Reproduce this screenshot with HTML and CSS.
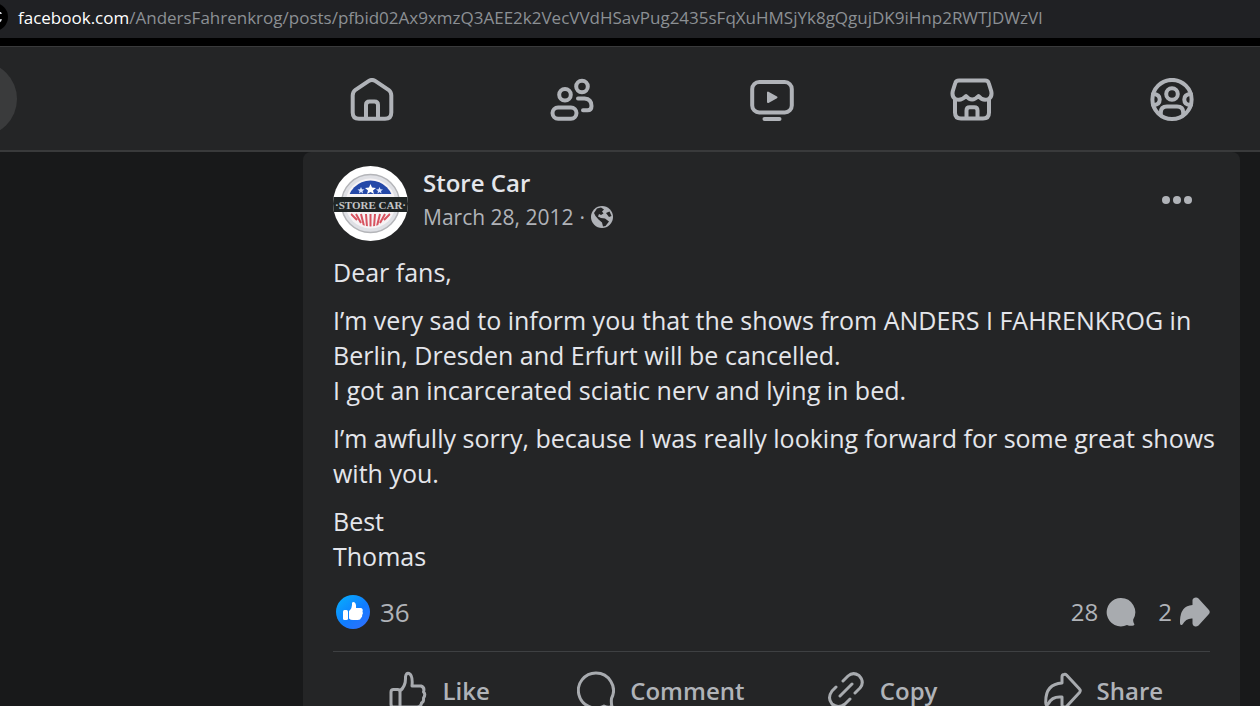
FILE: index.html
```
<!DOCTYPE html>
<html lang="en">
<head>
    <meta charset="UTF-8">
    <meta name="viewport" content="width=device-width, initial-scale=1.0">
    <title>Store Car | Facebook</title>
    <link rel="stylesheet" href="styles.css">
</head>
<body>
    <div class="address-bar">
        <svg class="site-badge" viewBox="0 0 8 28" aria-hidden="true">
            <circle cx="-6" cy="14" r="14" fill="#000"/>
            <path d="M-2 10Q1 9 1 11M-2 19Q1 19 1 16" fill="none" stroke="#e4e6eb" stroke-width="1.5"/>
        </svg>
        <div class="url"><span class="domain">facebook.com</span>/AndersFahrenkrog/posts/pfbid02Ax9xmzQ3AEE2k2VecVVdHSavPug2435sFqXuHMSjYk8gQgujDK9iHnp2RWTJDWzVl</div>
    </div>

    <header class="top-bar">
        <button type="button" class="search-button" aria-label="Search"></button>
        <nav class="main-nav">
            <a href="#" aria-label="Home">
                <svg viewBox="0 0 44 44">
                    <path d="M2.7 17.5Q2.7 14 5.5 11.8L18.5 3.1Q22 .8 25.5 3.1L38.5 11.8Q41.3 14 41.3 17.5V34.5Q41.3 40.8 35 40.8H9Q2.7 40.8 2.7 34.5Z"/>
                    <path d="M16 40V27Q16 23.5 19.5 23.5H24.5Q28 23.5 28 27V40"/>
                </svg>
            </a>
            <a href="#" aria-label="Friends">
                <svg viewBox="0 0 44 44">
                    <circle cx="15" cy="16.7" r="5.8"/>
                    <circle cx="32" cy="8.5" r="5.8"/>
                    <rect x="2.5" y="29.5" width="24" height="11.2" rx="5.6"/>
                    <path d="M28 20.5H34.5Q41.5 21 41.5 28Q41.5 32.3 37.5 32.3H33"/>
                </svg>
            </a>
            <a href="#" aria-label="Video">
                <svg viewBox="0 0 44 44">
                    <rect x="2.2" y="4" width="39.6" height="30.5" rx="7"/>
                    <path d="M18 14.5V24L26.5 19.3Z" fill="#b0b3b8" stroke-width="2"/>
                    <path d="M14.5 41H29.5"/>
                </svg>
            </a>
            <a href="#" aria-label="Marketplace">
                <svg viewBox="0 0 44 44">
                    <path d="M9 2.5H35Q38 2.5 38.7 5L41.2 13Q42.5 19 38.5 21Q33 23.5 28.5 18Q22 25 16 18Q11 23.5 5.5 21Q1.5 19 2.8 13L5.3 5Q6 2.5 9 2.5Z"/>
                    <path d="M5 22V34.5Q5 40.5 11 40.5H33Q39 40.5 39 34.5V22M16.5 40V32.5Q16.5 29.2 19.8 29.2H24.2Q27.5 29.2 27.5 32.5V40"/>
                </svg>
            </a>
            <a href="#" aria-label="Groups">
                <svg viewBox="0 0 44 44">
                    <circle cx="22" cy="21.5" r="19.6"/>
                    <circle cx="22" cy="16" r="5.8"/>
                    <path d="M10.8 37V34.5Q10.8 28.5 17 28.5H27Q33.2 28.5 33.2 34.5V37M3 16Q9.7 16 9.7 21.5Q9.7 27 3 27M41 16Q34.3 16 34.3 21.5Q34.3 27 41 27"/>
                </svg>
            </a>
        </nav>
    </header>

    <main class="feed">
        <article class="post">
            <div class="post-header">
                <a href="#" class="avatar" aria-label="Store Car">
                    <svg viewBox="0 0 75 75">
                        <defs>
                            <clipPath id="avatarClip"><circle cx="37.5" cy="37.5" r="37.5"/></clipPath>
                            <clipPath id="badgeClip"><circle cx="37.5" cy="37.5" r="23"/></clipPath>
                        </defs>
                        <g clip-path="url(#avatarClip)">
                            <rect width="75" height="75" fill="#fff"/>
                            <circle cx="37.5" cy="37.5" r="29" fill="#dfe0e5" stroke="#b4b5b9" stroke-width="1.5"/>
                            <circle cx="37.5" cy="37.5" r="25" fill="#f6f3f5"/>
                            <g clip-path="url(#badgeClip)">
                                <path d="M14 14H61V28H14Z" fill="#2448a8"/>
                                <path d="M18 48L24 54M23 48L28 57M28 48L31 60M33 48L34 61M37.5 48V62M42 48L41 61M47 48L44 60M52 48L47 57M57 48L51 54" stroke="#d85360" stroke-width="2"/>
                            </g>
                            <path d="M37.5 18L39 21.5L43 22L40 24.5L41 28L37.5 26L34 28L35 24.5L32 22L36 21.5Z" fill="#fff"/>
                            <path d="M28 21L29 23.3L31.5 23.5L29.5 25L30 27.5L28 26L26 27.5L26.5 25L24.5 23.5L27 23.3ZM46.500 21L47.5 23.3L50 23.5L48 25L48.5 27.5L46.5 26L44.5 27.5L45 25L43 23.5L45.5 23.3Z" fill="#dbe5ff"/>
                            <rect y="31" width="75" height="15" fill="#1f2424"/>
                            <text x="37.5" y="42.5" text-anchor="middle" class="avatar-text">·STORE CAR·</text>
                        </g>
                    </svg>
                </a>
                <div class="post-meta">
                    <a href="#" class="author">Store Car</a>
                    <div class="date-row">
                        <a href="#">March 28, 2012</a>
                        <span>·</span>
                        <svg class="globe" viewBox="0 0 22 22" aria-label="Public">
                            <circle cx="11" cy="11" r="11" fill="#b0b3b8"/>
                            <path d="M6 2.5L10 1.5L13 3.5L11 5.5L12.5 7.5L10 9L8 8L7 10.5L10 12L14 12.5L18 15.5L14.5 20L12 20.5L11 16.5L7.5 13.5L4.5 10L3 7Z" fill="#242526"/>
                            <path d="M15 7L18.5 5.5L20.5 10L18 11Z" fill="#242526"/>
                        </svg>
                    </div>
                </div>
                <button type="button" class="more-button" aria-label="More options">
                    <svg viewBox="0 0 30 8"><circle cx="4" cy="4" r="4"/><circle cx="15" cy="4" r="4"/><circle cx="26" cy="4" r="4"/></svg>
                </button>
            </div>

            <div class="post-text">
                <p>Dear fans,</p>
                <p>I’m very sad to inform you that the shows from ANDERS I FAHRENKROG in Berlin, Dresden and Erfurt will be cancelled.<br>I got an incarcerated sciatic nerv and lying in bed.</p>
                <p>I’m awfully sorry, because I was really looking forward for some great shows with you.</p>
                <p>Best<br>Thomas</p>
            </div>

            <div class="stats">
                <button type="button" class="stat likes">
                    <svg class="like-badge" viewBox="0 0 34 34">
                        <defs>
                            <linearGradient id="likeFill" x1="0.1" y1="0.1" x2="0.8" y2="0.9">
                                <stop offset="0" stop-color="#08a9fc"/>
                                <stop offset="0.6" stop-color="#107cff"/>
                                <stop offset="1" stop-color="#2a72ff"/>
                            </linearGradient>
                        </defs>
                        <circle cx="17" cy="17" r="17" fill="url(#likeFill)"/>
                        <rect x="7" y="15" width="5" height="10" rx="1.5" fill="#fff"/>
                        <path d="M13 16Q16.5 13 16 8Q16.2 7 17.5 7Q20.5 7.5 20 13H25Q27.5 14 26.5 16.5Q27.5 18 26.2 20Q26.5 22 25 23Q24.5 25 22 25H17Q14.5 25 13 23.5Z" fill="#fff"/>
                    </svg>
                    <span>36</span>
                </button>
                <div class="stats-right">
                    <button type="button" class="stat">
                        <span>28</span>
                        <svg viewBox="0 0 30 30"><path d="M15 1A14.200 14.200 0 1 0 21 28Q24 29.3 27.5 28.6Q29 28 28 26.5Q27 25 27.2 22.5A14.2 14.2 0 0 0 15 1Z"/></svg>
                    </button>
                    <button type="button" class="stat">
                        <span>2</span>
                        <svg viewBox="0 0 30 30"><path d="M12.5 8V3Q13 .5 16 .5Q17.500 .5 18.5 1.5L28.5 12.5Q31 15 28.5 17.500L18.5 28.5Q16.5 30 14.5 29.3Q12.5 28.8 12.5 26.5V21.5Q6 21 2.5 27.5Q0 29 0 26Q-.5 9 12.5 8Z"/></svg>
                    </button>
                </div>
            </div>

            <div class="actions">
                <button type="button" class="action">
                    <svg viewBox="0 0 38 38">
                        <path d="M11 20Q17 15 16.5 6Q17 1.5 20 2.5Q24 4 23 15H32Q36 16.5 34.5 21Q37 23 34.5 27Q35 31 32.5 32Q32 36 28 36H4.5Q2 36 2 33V21Q2 18.5 4.5 18.5H8.5Q11 18.5 11 21V35"/>
                    </svg>
                    Like
                </button>
                <button type="button" class="action">
                    <svg viewBox="0 0 38 38">
                        <path d="M19 2A17.5 17.5 0 1 0 27 35Q31 37 35 35.5Q34 32 34.5 27.5A17.5 17.5 0 0 0 19 2Z"/>
                    </svg>
                    Comment
                </button>
                <button type="button" class="action">
                    <svg viewBox="0 0 38 38">
                        <path d="M16 10L21 5Q26 .5 32 4.5Q38 11 33 17L28 22M9 16L5 20Q0 27 5 33Q11 38 18 33L23 28M13 25L25 13"/>
                    </svg>
                    Copy
                </button>
                <button type="button" class="action">
                    <svg viewBox="0 0 38 38">
                        <path d="M18 12V6Q18 3.5 20 3.500Q21.5 3 22.5 4L35.5 18Q37 19.5 35.5 21.5L23 35Q21.5 36.5 19.5 36Q18 35.5 18 33.5V26Q8 25 4.5 32.5Q2 36 1.8 32Q1 13 18 12Z"/>
                    </svg>
                    Share
                </button>
            </div>
        </article>
    </main>
</body>
</html>
```
FILE: styles.css
```
* {
    box-sizing: border-box;
}
body {
    margin: 0;
    height: 100vh;
    overflow: hidden;
    background-color: #18191a;
    color: #e4e6eb;
    font-family: "Segoe UI", "Open Sans", sans-serif;
    font-size: 24px;
}
a {
    color: inherit;
    text-decoration: none;
}
button {
    display: flex;
    align-items: center;
    padding: 0;
    border: none;
    background: none;
    color: #b0b3b8;
    font-family: inherit;
    font-size: 24px;
    cursor: pointer;
}
svg {
    display: block;
    flex-shrink: 0;
}

/* Browser address bar */
.address-bar {
    display: flex;
    align-items: center;
    gap: 10px;
    height: 46px;
    padding-bottom: 4px;
    background-color: #202124;
    border-bottom: 8px solid #000;
}
.site-badge {
    width: 8px;
    height: 28px;
}
.url {
    color: #8c9094;
    font-size: 17px;
    white-space: nowrap;
}
.domain {
    color: #fff;
}

/* Top navigation */
.top-bar {
    display: flex;
    align-items: center;
    height: 106px;
    overflow: hidden;
    background-color: #242526;
    border-top: 1px solid #393a3b;
    border-bottom: 2px solid #393a3b;
}
.search-button {
    flex-shrink: 0;
    width: 74px;
    height: 74px;
    margin-left: -57px;
    border-radius: 50%;
    background-color: #3a3b3c;
}
.main-nav {
    display: grid;
    grid-template-columns: repeat(5, 1fr);
    flex: 1;
    margin-left: 255px;
    margin-right: -12px;
    padding-top: 2px;
}
.main-nav a {
    display: flex;
    justify-content: center;
}
.main-nav svg {
    width: 44px;
    height: 44px;
    fill: none;
    stroke: #b0b3b8;
    stroke-width: 4;
    stroke-linecap: round;
    stroke-linejoin: round;
}

/* Post */
.feed {
    padding: 0 20px 0 303px;
}
.post {
    padding: 14px 30px 20px;
    border-radius: 8px;
    background-color: #242526;
}
.post-header {
    display: flex;
    align-items: center;
    height: 75px;
}
.avatar svg {
    width: 75px;
    height: 75px;
}
.avatar-text {
    fill: #c4c6c6;
    font-family: "Liberation Serif", serif;
    font-size: 11px;
    font-weight: bold;
}
.post-meta {
    flex: 1;
    margin-left: 15px;
    padding-bottom: 8px;
}
.author {
    display: block;
    font-weight: 600;
    line-height: 34px;
}
.date-row {
    display: flex;
    align-items: center;
    gap: 6px;
    color: #b0b3b8;
    font-size: 21px;
    line-height: 34px;
}
.globe {
    width: 22px;
    height: 22px;
}
.more-button {
    margin-right: 18px;
    padding-bottom: 8px;
}
.more-button svg {
    width: 30px;
    height: 8px;
    fill: #b0b3b8;
}
.post-text {
    margin: 14px -8px 0 0;
    font-size: 25px;
    line-height: 35px;
}
.post-text p {
    margin: 0 0 13px;
}
.post-text p:last-child {
    margin-bottom: 0;
}

/* Reactions and counters */
.stats {
    display: flex;
    align-items: center;
    justify-content: space-between;
    height: 78px;
    padding-left: 3px;
    padding-bottom: 2px;
    border-bottom: 1px solid #3e4042;
}
.stats-right {
    display: flex;
    gap: 22px;
}
.stat {
    gap: 8px;
}
.stat svg {
    width: 30px;
    height: 30px;
    fill: #a8abaf;
}
.likes {
    gap: 10px;
    font-size: 26px;
}
.likes .like-badge {
    width: 34px;
    height: 34px;
}
.actions {
    display: grid;
    grid-template-columns: repeat(4, 1fr);
    margin: 0 -4px;
    padding-top: 8px;
}
.action {
    justify-content: center;
    gap: 15px;
    height: 60px;
    font-weight: 600;
}
.action svg {
    width: 38px;
    height: 38px;
    fill: none;
    stroke: #a8abaf;
    stroke-width: 3;
    stroke-linecap: round;
    stroke-linejoin: round;
}
```
